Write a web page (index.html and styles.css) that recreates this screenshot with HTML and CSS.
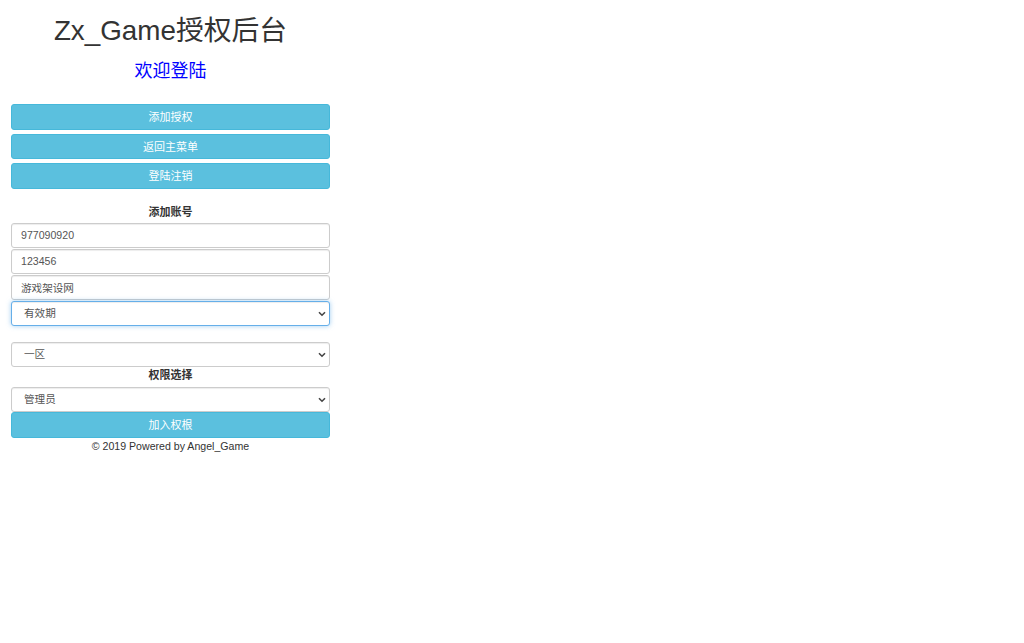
FILE: index.html
```html
<!DOCTYPE html>
<html lang="zh-CN">
<head>
<meta charset="utf-8">
<title>Zx_Game授权后台</title>
<link rel="stylesheet" href="styles.css">
</head>
<body>
<div class="page">
  <h1 class="title">Zx_Game授权后台</h1>
  <h2 class="welcome">欢迎登陆</h2>

  <div class="menu">
    <button class="btn">添加授权</button>
    <button class="btn">返回主菜单</button>
    <button class="btn">登陆注销</button>
  </div>

  <div class="label label-first">添加账号</div>
  <div class="fields">
    <input class="field" type="text" value="977090920">
    <input class="field" type="text" value="123456">
    <input class="field" type="text" value="游戏架设网">
    <div class="select-wrap">
      <select class="field select focused">
        <option>有效期</option>
      </select>
      <svg class="chevron" width="8" height="6" viewBox="0 0 8 6"><path d="M1 1.2 L4 4.2 L7 1.2" fill="none" stroke="#444" stroke-width="1.6"/></svg>
    </div>
  </div>

  <div class="select-wrap zone">
    <select class="field select">
      <option>一区</option>
    </select>
    <svg class="chevron" width="8" height="6" viewBox="0 0 8 6"><path d="M1 1.2 L4 4.2 L7 1.2" fill="none" stroke="#444" stroke-width="1.6"/></svg>
  </div>
  <div class="label">权限选择</div>
  <div class="select-wrap role">
    <select class="field select">
      <option>管理员</option>
    </select>
    <svg class="chevron" width="8" height="6" viewBox="0 0 8 6"><path d="M1 1.2 L4 4.2 L7 1.2" fill="none" stroke="#444" stroke-width="1.6"/></svg>
  </div>
  <button class="btn submit">加入权根</button>
  <div class="footer">© 2019 Powered by Angel_Game</div>
</div>
</body>
</html>
```

FILE: styles.css
```css
html, body {
  margin: 0;
  padding: 0;
  background: #fff;
}

body {
  font-family: "Liberation Sans", Arial, "Noto Sans CJK SC", sans-serif;
  color: #333;
}

.page {
  width: 319px;
  margin-left: 11px;
  padding-top: 16px;
  display: flex;
  flex-direction: column;
}

.title {
  margin: 0;
  font-size: 27.8px;
  line-height: 30px;
  font-weight: normal;
  text-align: center;
  color: #333;
}

.welcome {
  margin: 15px 0 0;
  font-size: 18px;
  line-height: 20px;
  font-weight: normal;
  text-align: center;
  color: #0000ff;
}

.menu {
  margin-top: 23px;
  display: flex;
  flex-direction: column;
  gap: 4px;
}

.btn {
  display: block;
  width: 100%;
  height: 25.5px;
  margin: 0;
  padding: 1px 0 0;
  border: 1px solid #46b8da;
  border-radius: 3px;
  background: #5bc0de;
  color: #fff;
  font-family: "Liberation Sans", Arial, "Noto Sans CJK SC", sans-serif;
  font-size: 11px;
  line-height: 22px;
  text-align: center;
}

.label {
  font-size: 11px;
  line-height: 16px;
  font-weight: bold;
  text-align: center;
  color: #333;
}

.label-first {
  margin-top: 15px;
  margin-bottom: 3px;
}

.fields {
  display: flex;
  flex-direction: column;
  gap: 1px;
}

.field {
  display: block;
  box-sizing: border-box;
  width: 100%;
  height: 25px;
  margin: 0;
  padding: 0 9px;
  border: 1px solid #ccc;
  border-radius: 3px;
  background: #fff;
  color: #555;
  font-family: "Liberation Sans", Arial, "Noto Sans CJK SC", sans-serif;
  font-size: 10.6px;
  box-shadow: inset 0 1px 1px rgba(0, 0, 0, 0.075);
  outline: none;
}

.select-wrap {
  position: relative;
}

.select {
  -webkit-appearance: none;
  appearance: none;
  padding: 0 20px 0 12px;
}

.chevron {
  position: absolute;
  right: 4px;
  top: 10px;
  pointer-events: none;
}

.focused {
  border-color: #66afe9;
  box-shadow: inset 0 1px 1px rgba(0, 0, 0, 0.075), 0 0 5px rgba(102, 175, 233, 0.6);
}

.zone {
  margin-top: 16px;
}

.role {
  margin-top: 4px;
}

.submit {
  height: 26px;
  line-height: 23px;
}

.footer {
  font-size: 10.6px;
  line-height: 16px;
  text-align: center;
  color: #333;
}
```
